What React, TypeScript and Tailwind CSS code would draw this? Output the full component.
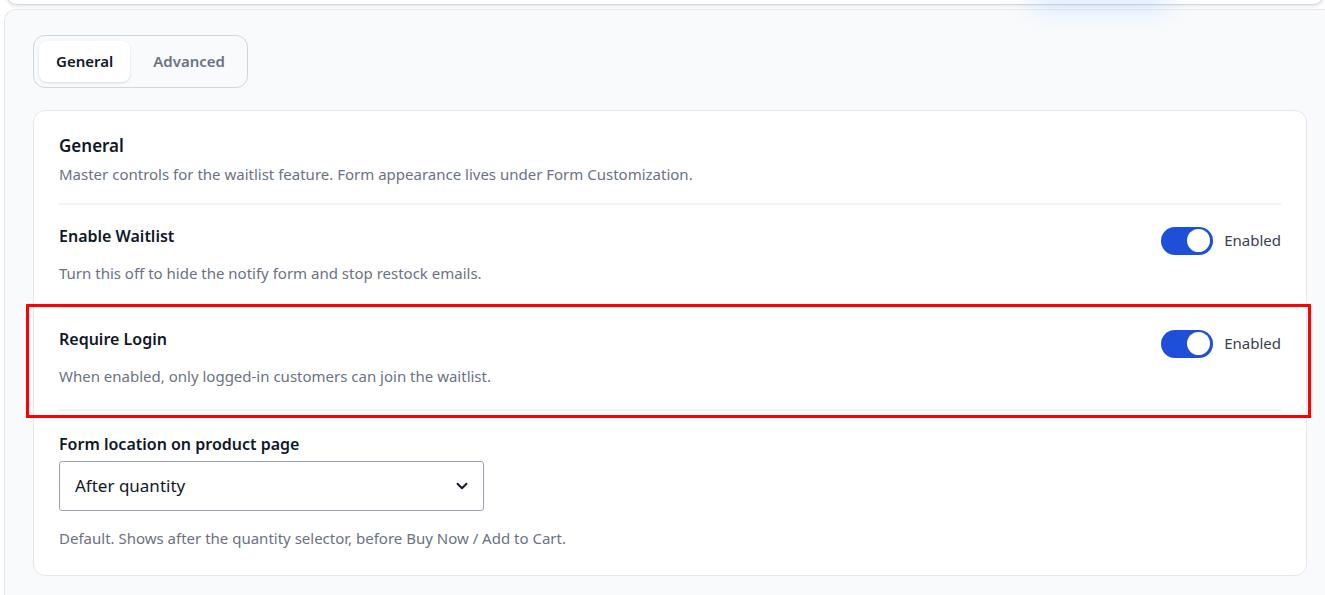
import { ChevronDown } from 'lucide-react';

type Row = {
    title: string;
    description: string;
};

const rows: Row[] = [
    {
        title: 'Enable Waitlist',
        description: 'Turn this off to hide the notify form and stop restock emails.',
    },
    {
        title: 'Require Login',
        description: 'When enabled, only logged-in customers can join the waitlist.',
    },
];

function Toggle() {
    return (
        <div className="flex items-center gap-[11px]">
            <span className="flex h-[28px] w-[52px] items-center justify-end rounded-full bg-[#1d4fd8] px-[3px]">
                <span className="h-[23px] w-[23px] rounded-full bg-white" />
            </span>
            <span className="text-[15px] text-gray-700">Enabled</span>
        </div>
    );
}

export default function App() {
    return (
        <div
            className="relative h-[595px] w-[1325px] overflow-hidden bg-white"
            style={{ fontFamily: '"Noto Sans", "Open Sans", sans-serif' }}
        >
            {/* card above, only its bottom edge shows */}
            <div className="absolute left-[5px] right-0 top-[-12px] z-10 h-[17px] rounded-b-xl border border-gray-300 bg-white shadow-[0_2px_3px_rgba(0,0,0,0.08)]" />
            <div className="absolute left-[1030px] top-[-18px] z-10 h-[24px] w-[140px] rounded-full bg-blue-300/40 blur-md" />

            <div className="ml-[4px] mt-[9px] h-[620px] rounded-tl-xl border-t border-l border-gray-200 bg-[#f8fafc] pl-[28px] pr-[18px] pt-[25px]">
                <div className="inline-flex gap-[6px] rounded-xl border border-gray-300 bg-[#f8fafc] p-[5px]">
                    <span className="rounded-lg bg-white px-[17px] py-[9px] text-[15px] font-semibold text-gray-900 shadow-sm">
                        General
                    </span>
                    <span className="px-[17px] py-[9px] text-[15px] font-semibold text-gray-500">
                        Advanced
                    </span>
                </div>

                <div className="mt-[22px] rounded-xl border border-gray-200 bg-white px-[25px] pb-[26px] pt-[23px]">
                    <h2 className="text-[17px] font-semibold leading-[24px] text-gray-900">General</h2>
                    <p className="mt-[5px] text-[15px] leading-[22px] text-gray-500">
                        Master controls for the waitlist feature. Form appearance lives under Form
                        Customization.
                    </p>

                    <div className="mt-[18px]">
                        {rows.map((row) => (
                            <div
                                key={row.title}
                                className="flex items-start justify-between border-t-2 border-gray-100 pb-[22px] pt-[19px]"
                            >
                                <div>
                                    <h3 className="text-[16px] font-semibold leading-[24px] text-gray-900">
                                        {row.title}
                                    </h3>
                                    <p className="mt-[14px] text-[15px] leading-[22px] text-gray-500">
                                        {row.description}
                                    </p>
                                </div>
                                <div className="pt-[3px]">
                                    <Toggle />
                                </div>
                            </div>
                        ))}
                    </div>

                    <div className="border-t-2 border-gray-100 pt-[21px]">
                        <h3 className="text-[16px] font-semibold leading-[24px] text-gray-900">
                            Form location on product page
                        </h3>
                        <div className="mt-[5px] flex h-[50px] w-[425px] items-center justify-between rounded-[3px] border border-gray-400 bg-white pl-[15px] pr-[12px] text-[17px] text-gray-900">
                            <span>After quantity</span>
                            <ChevronDown className="h-[18px] w-[18px] text-gray-900" strokeWidth={2.5} />
                        </div>
                        <p className="mt-[16px] text-[15px] leading-[22px] text-gray-500">
                            Default. Shows after the quantity selector, before Buy Now / Add to Cart.
                        </p>
                    </div>
                </div>
            </div>

            {/* annotation box */}
            <div className="pointer-events-none absolute left-[26px] top-[304px] h-[114px] w-[1285px] border-[3px] border-[#ff0000]" />
        </div>
    );
}
